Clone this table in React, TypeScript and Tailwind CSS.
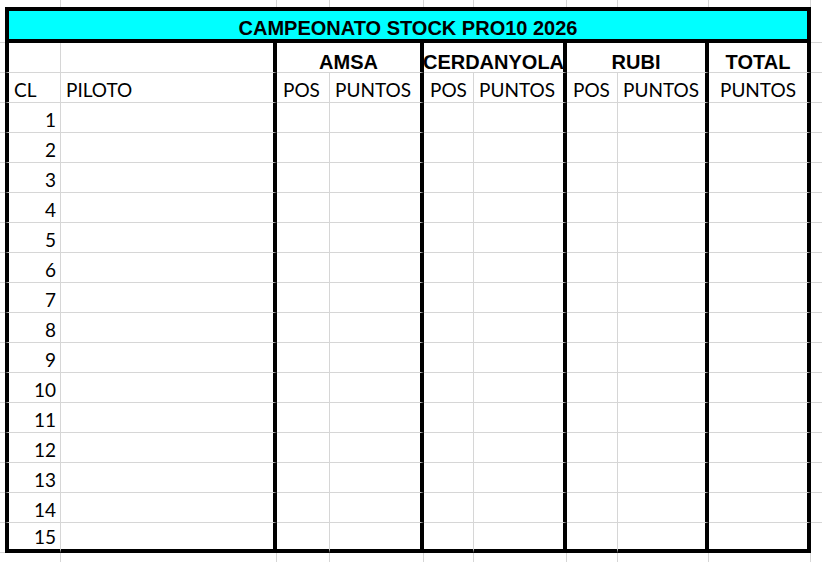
const GRAY = 'border-[#d6d6d6]';

// right border of each table column (A..I): g = grid line, k = thick black
const RIGHT = ['g', 'k', 'g', 'k', 'g', 'k', 'g', 'k', 'k'] as const;

const calibri = "font-['Lato','Open_Sans',sans-serif]";
const arialBold = "font-['Liberation_Sans',Arial,sans-serif] font-bold";

function rb(kind: 'g' | 'k') {
  return kind === 'k' ? 'border-r-4 border-r-black' : 'border-r border-r-[#d6d6d6]';
}

function OutsideStrip() {
  return (
    <>
      <div />
      {RIGHT.map((_, i) => (
        <div key={i} className={`border-r ${GRAY}`} />
      ))}
      <div />
    </>
  );
}

function SideCell() {
  return <div className={`border-b ${GRAY}`} />;
}

export default function App() {
  const pilots = Array.from({ length: 15 }, (_, i) => i + 1);

  return (
    <div className="h-[562px] w-[822px] overflow-hidden bg-white text-black">
      <div className="grid h-full grid-cols-[5px_56px_216px_53px_94px_50px_93px_51px_91px_102px_1fr] grid-rows-[7px_36px_30px_30px_repeat(15,30px)_1fr]">
        <OutsideStrip />

        {/* title */}
        <SideCell />
        <div
          className={`col-span-9 flex items-end justify-center border-4 border-black bg-[#00ffff] pb-[1px] text-[20px] leading-none ${arialBold}`}
        >
          CAMPEONATO STOCK PRO10 2026
        </div>
        <SideCell />

        {/* circuits */}
        <SideCell />
        <div className={`border-l-4 border-l-black border-b ${GRAY} border-r border-r-[#d6d6d6]`} />
        <div className={`border-b ${GRAY} border-r-4 border-r-black`} />
        {['AMSA', 'CERDANYOLA', 'RUBI'].map((c) => (
          <div
            key={c}
            className={`col-span-2 flex items-end justify-center overflow-hidden whitespace-nowrap border-b ${GRAY} border-r-4 border-r-black text-[20px] leading-none ${arialBold}`}
          >
            {c}
          </div>
        ))}
        <div
          className={`flex items-end justify-center border-b ${GRAY} border-r-4 border-r-black text-[20px] leading-none ${arialBold}`}
        >
          TOTAL
        </div>
        <SideCell />

        {/* column titles */}
        <SideCell />
        {['CL', 'PILOTO', 'POS', 'PUNTOS', 'POS', 'PUNTOS', 'POS', 'PUNTOS', 'PUNTOS'].map((t, i) => (
          <div
            key={i}
            className={`flex items-end whitespace-nowrap border-b ${GRAY} ${rb(RIGHT[i])} ${
              i === 0 ? 'border-l-4 border-l-black' : ''
            } ${i === 8 ? 'justify-center' : i === 2 || i === 4 || i === 6 ? 'pl-[6px]' : 'pl-[5px]'} pb-[3px] text-[19px] leading-none ${calibri}`}
          >
            {t}
          </div>
        ))}
        <SideCell />

        {pilots.map((n) => {
          const last = n === 15;
          const bottom = last ? 'border-b-4 border-b-black' : 'border-b border-b-[#d6d6d6]';
          return (
            <div key={n} className="contents">
              <SideCell />
              {RIGHT.map((k, i) => (
                <div
                  key={i}
                  className={`${bottom} ${rb(k)} ${
                    i === 0
                      ? `flex items-end justify-end border-l-4 border-l-black pr-[4px] pb-[3px] text-[19px] leading-none ${calibri}`
                      : ''
                  }`}
                >
                  {i === 0 ? n : null}
                </div>
              ))}
              {last ? <div /> : <SideCell />}
            </div>
          );
        })}

        <OutsideStrip />
      </div>
    </div>
  );
}
